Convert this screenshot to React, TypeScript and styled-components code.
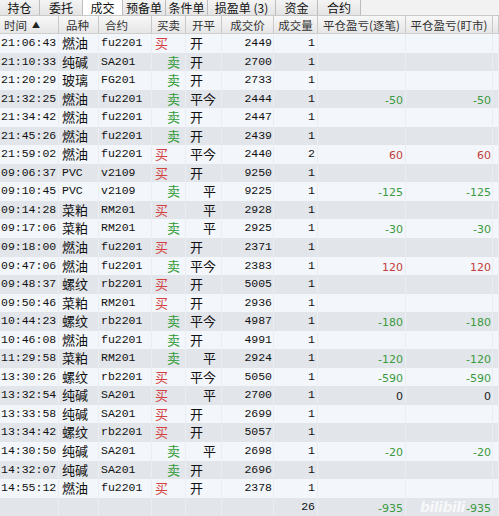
import React from "react";
import styled, { createGlobalStyle } from "styled-components";

const GlobalStyle = createGlobalStyle`
  html, body {
    margin: 0;
    padding: 0;
    background: #f3f6fa;
  }
  body {
    width: 499px;
    height: 516px;
    overflow: hidden;
  }
`;

const COLS = "59px 40px 53px 34px 36px 52px 44px 88px 87px 6px";

type Row = {
  time: string;
  kind: string;
  code: string;
  side: "买" | "卖";
  open: "开" | "平" | "平今";
  price: string;
  qty: string;
  pl?: number;
};

const rows: Row[] = [
  { time: "21:06:43", kind: "燃油", code: "fu2201", side: "买", open: "开", price: "2449", qty: "1" },
  { time: "21:10:33", kind: "纯碱", code: "SA201", side: "卖", open: "开", price: "2700", qty: "1" },
  { time: "21:20:29", kind: "玻璃", code: "FG201", side: "卖", open: "开", price: "2733", qty: "1" },
  { time: "21:32:25", kind: "燃油", code: "fu2201", side: "卖", open: "平今", price: "2444", qty: "1", pl: -50 },
  { time: "21:34:42", kind: "燃油", code: "fu2201", side: "卖", open: "开", price: "2447", qty: "1" },
  { time: "21:45:26", kind: "燃油", code: "fu2201", side: "卖", open: "开", price: "2439", qty: "1" },
  { time: "21:59:02", kind: "燃油", code: "fu2201", side: "买", open: "平今", price: "2440", qty: "2", pl: 60 },
  { time: "09:06:37", kind: "PVC", code: "v2109", side: "买", open: "开", price: "9250", qty: "1" },
  { time: "09:10:45", kind: "PVC", code: "v2109", side: "卖", open: "平", price: "9225", qty: "1", pl: -125 },
  { time: "09:14:28", kind: "菜粕", code: "RM201", side: "买", open: "平", price: "2928", qty: "1" },
  { time: "09:17:06", kind: "菜粕", code: "RM201", side: "卖", open: "平", price: "2925", qty: "1", pl: -30 },
  { time: "09:18:00", kind: "燃油", code: "fu2201", side: "买", open: "开", price: "2371", qty: "1" },
  { time: "09:47:06", kind: "燃油", code: "fu2201", side: "卖", open: "平今", price: "2383", qty: "1", pl: 120 },
  { time: "09:48:37", kind: "螺纹", code: "rb2201", side: "买", open: "开", price: "5005", qty: "1" },
  { time: "09:50:46", kind: "菜粕", code: "RM201", side: "买", open: "开", price: "2936", qty: "1" },
  { time: "10:44:23", kind: "螺纹", code: "rb2201", side: "卖", open: "平今", price: "4987", qty: "1", pl: -180 },
  { time: "10:46:08", kind: "燃油", code: "fu2201", side: "卖", open: "开", price: "4991", qty: "1" },
  { time: "11:29:58", kind: "菜粕", code: "RM201", side: "卖", open: "平", price: "2924", qty: "1", pl: -120 },
  { time: "13:30:26", kind: "螺纹", code: "rb2201", side: "买", open: "平今", price: "5050", qty: "1", pl: -590 },
  { time: "13:32:54", kind: "纯碱", code: "SA201", side: "买", open: "平", price: "2700", qty: "1", pl: 0 },
  { time: "13:33:58", kind: "纯碱", code: "SA201", side: "买", open: "开", price: "2699", qty: "1" },
  { time: "13:34:42", kind: "螺纹", code: "rb2201", side: "买", open: "开", price: "5057", qty: "1" },
  { time: "14:30:50", kind: "纯碱", code: "SA201", side: "卖", open: "平", price: "2698", qty: "1", pl: -20 },
  { time: "14:32:07", kind: "纯碱", code: "SA201", side: "卖", open: "开", price: "2696", qty: "1" },
  { time: "14:55:12", kind: "燃油", code: "fu2201", side: "买", open: "开", price: "2378", qty: "1" },
];

const tabs = [
  { label: "持仓", w: 40 },
  { label: "委托", w: 43 },
  { label: "成交", w: 40, active: true },
  { label: "预备单", w: 43 },
  { label: "条件单", w: 42 },
  { label: "损盈单 (3)", w: 68 },
  { label: "资金", w: 42 },
  { label: "合约", w: 43 },
];

const Page = styled.div`
  position: relative;
  width: 499px;
  height: 516px;
  overflow: hidden;
  background: #f3f6fa;
  font-family: "Noto Sans CJK SC", sans-serif;
  color: #111;
`;

const TabBar = styled.div`
  display: flex;
  height: 16px;
  box-sizing: border-box;
  background: #f2f2f2;
  border-bottom: 1px solid #c9c9c9;
`;

const Tab = styled.div<{ $w: number; $active?: boolean }>`
  display: flex;
  align-items: center;
  justify-content: center;
  width: ${(p) => p.$w}px;
  box-sizing: border-box;
  border-right: 1px solid #bdbdbd;
  background: ${(p) =>
    p.$active ? "#ffffff" : "linear-gradient(#f4f4f4, #e4e4e4)"};
  font-size: 12px;
  line-height: 12px;
  color: #111;
  white-space: nowrap;
`;

const HeaderRow = styled.div`
  display: grid;
  grid-template-columns: ${COLS};
  height: 18px;
  box-sizing: border-box;
  background: linear-gradient(#f8f8f8, #e6e6e6);
  border-bottom: 1px solid #cfcfcf;
`;

const HeadCell = styled.div<{ $align?: string; $pad?: number }>`
  display: flex;
  align-items: center;
  justify-content: ${(p) => (p.$align === "left" ? "flex-start" : "center")};
  box-sizing: border-box;
  border-right: 1px solid #c9c9c9;
  font-size: 11.5px;
  line-height: 12px;
  color: #333;
  padding-left: ${(p) => p.$pad || 0}px;
  white-space: nowrap;
`;

const Arrow = styled.span`
  font-size: 8px;
  margin-left: 5px;
  color: #222;
`;

const DataRow = styled.div<{ $alt: boolean }>`
  display: grid;
  grid-template-columns: ${COLS};
  height: 18.55px;
  background: ${(p) => (p.$alt ? "#e2e5ea" : "#f3f6fa")};
`;

const Cell = styled.div<{ $align?: string; $padL?: number; $padR?: number; $mono?: boolean }>`
  box-sizing: border-box;
  border-right: 1px solid #eaedf1;
  line-height: 18.5px;
  white-space: nowrap;
  text-align: ${(p) => p.$align || "left"};
  padding-left: ${(p) => p.$padL || 0}px;
  padding-right: ${(p) => p.$padR || 0}px;
  font-family: ${(p) =>
    p.$mono
      ? `"Liberation Mono", "Noto Sans CJK SC", monospace`
      : `"Noto Sans CJK SC", sans-serif`};
  font-size: ${(p) => (p.$mono ? "11.5px" : "13px")};
  color: #111;
`;

const Side = styled.span<{ $buy: boolean }>`
  color: ${(p) => (p.$buy ? "#d2413f" : "#2f9a34")};
`;

const Money = styled.span<{ $v: number }>`
  font-family: "DejaVu Sans", sans-serif;
  font-size: 11px;
  color: ${(p) => (p.$v > 0 ? "#c33b3b" : p.$v < 0 ? "#3b9a40" : "#222")};
`;

const Watermark = styled.div`
  position: absolute;
  left: 420px;
  bottom: 1px;
  font-family: "DejaVu Sans", sans-serif;
  font-weight: bold;
  font-style: italic;
  font-size: 14px;
  letter-spacing: -0.5px;
  color: rgba(255, 255, 255, 0.75);
  pointer-events: none;
`;

const openPad = (o: string) => (o === "平" ? 17 : 4);

export default function App() {
  return (
    <Page>
      <GlobalStyle />
      <TabBar>
        {tabs.map((t) => (
          <Tab key={t.label} $w={t.w} $active={t.active}>
            {t.label}
          </Tab>
        ))}
      </TabBar>
      <HeaderRow>
        <HeadCell $align="left" $pad={4}>
          时间<Arrow>▲</Arrow>
        </HeadCell>
        <HeadCell $align="left" $pad={7}>品种</HeadCell>
        <HeadCell $align="left" $pad={6}>合约</HeadCell>
        <HeadCell>买卖</HeadCell>
        <HeadCell>开平</HeadCell>
        <HeadCell>成交价</HeadCell>
        <HeadCell>成交量</HeadCell>
        <HeadCell>平仓盈亏(逐笔)</HeadCell>
        <HeadCell>平仓盈亏(盯市)</HeadCell>
        <HeadCell />
      </HeaderRow>
      {rows.map((r, i) => (
        <DataRow key={r.time} $alt={i % 2 === 1}>
          <Cell $mono $padL={1}>{r.time}</Cell>
          <Cell $mono={r.kind === "PVC"} $padL={3}>{r.kind}</Cell>
          <Cell $mono $padL={2}>{r.code}</Cell>
          <Cell $padL={r.side === "买" ? 3 : 15}>
            <Side $buy={r.side === "买"}>{r.side}</Side>
          </Cell>
          <Cell $padL={openPad(r.open)}>{r.open}</Cell>
          <Cell $mono $align="right" $padR={1}>{r.price}</Cell>
          <Cell $mono $align="right" $padR={2}>{r.qty}</Cell>
          <Cell $align="right" $padR={2}>
            {r.pl !== undefined && <Money $v={r.pl}>{r.pl}</Money>}
          </Cell>
          <Cell $align="right" $padR={1}>
            {r.pl !== undefined && <Money $v={r.pl}>{r.pl}</Money>}
          </Cell>
          <Cell />
        </DataRow>
      ))}
      <DataRow $alt>
        <Cell />
        <Cell />
        <Cell />
        <Cell />
        <Cell />
        <Cell />
        <Cell $mono $align="right" $padR={2}>26</Cell>
        <Cell $align="right" $padR={2}>
          <Money $v={-935}>-935</Money>
        </Cell>
        <Cell $align="right" $padR={1}>
          <Money $v={-935}>-935</Money>
        </Cell>
        <Cell />
      </DataRow>
      <Watermark>bilibili</Watermark>
    </Page>
  );
}
